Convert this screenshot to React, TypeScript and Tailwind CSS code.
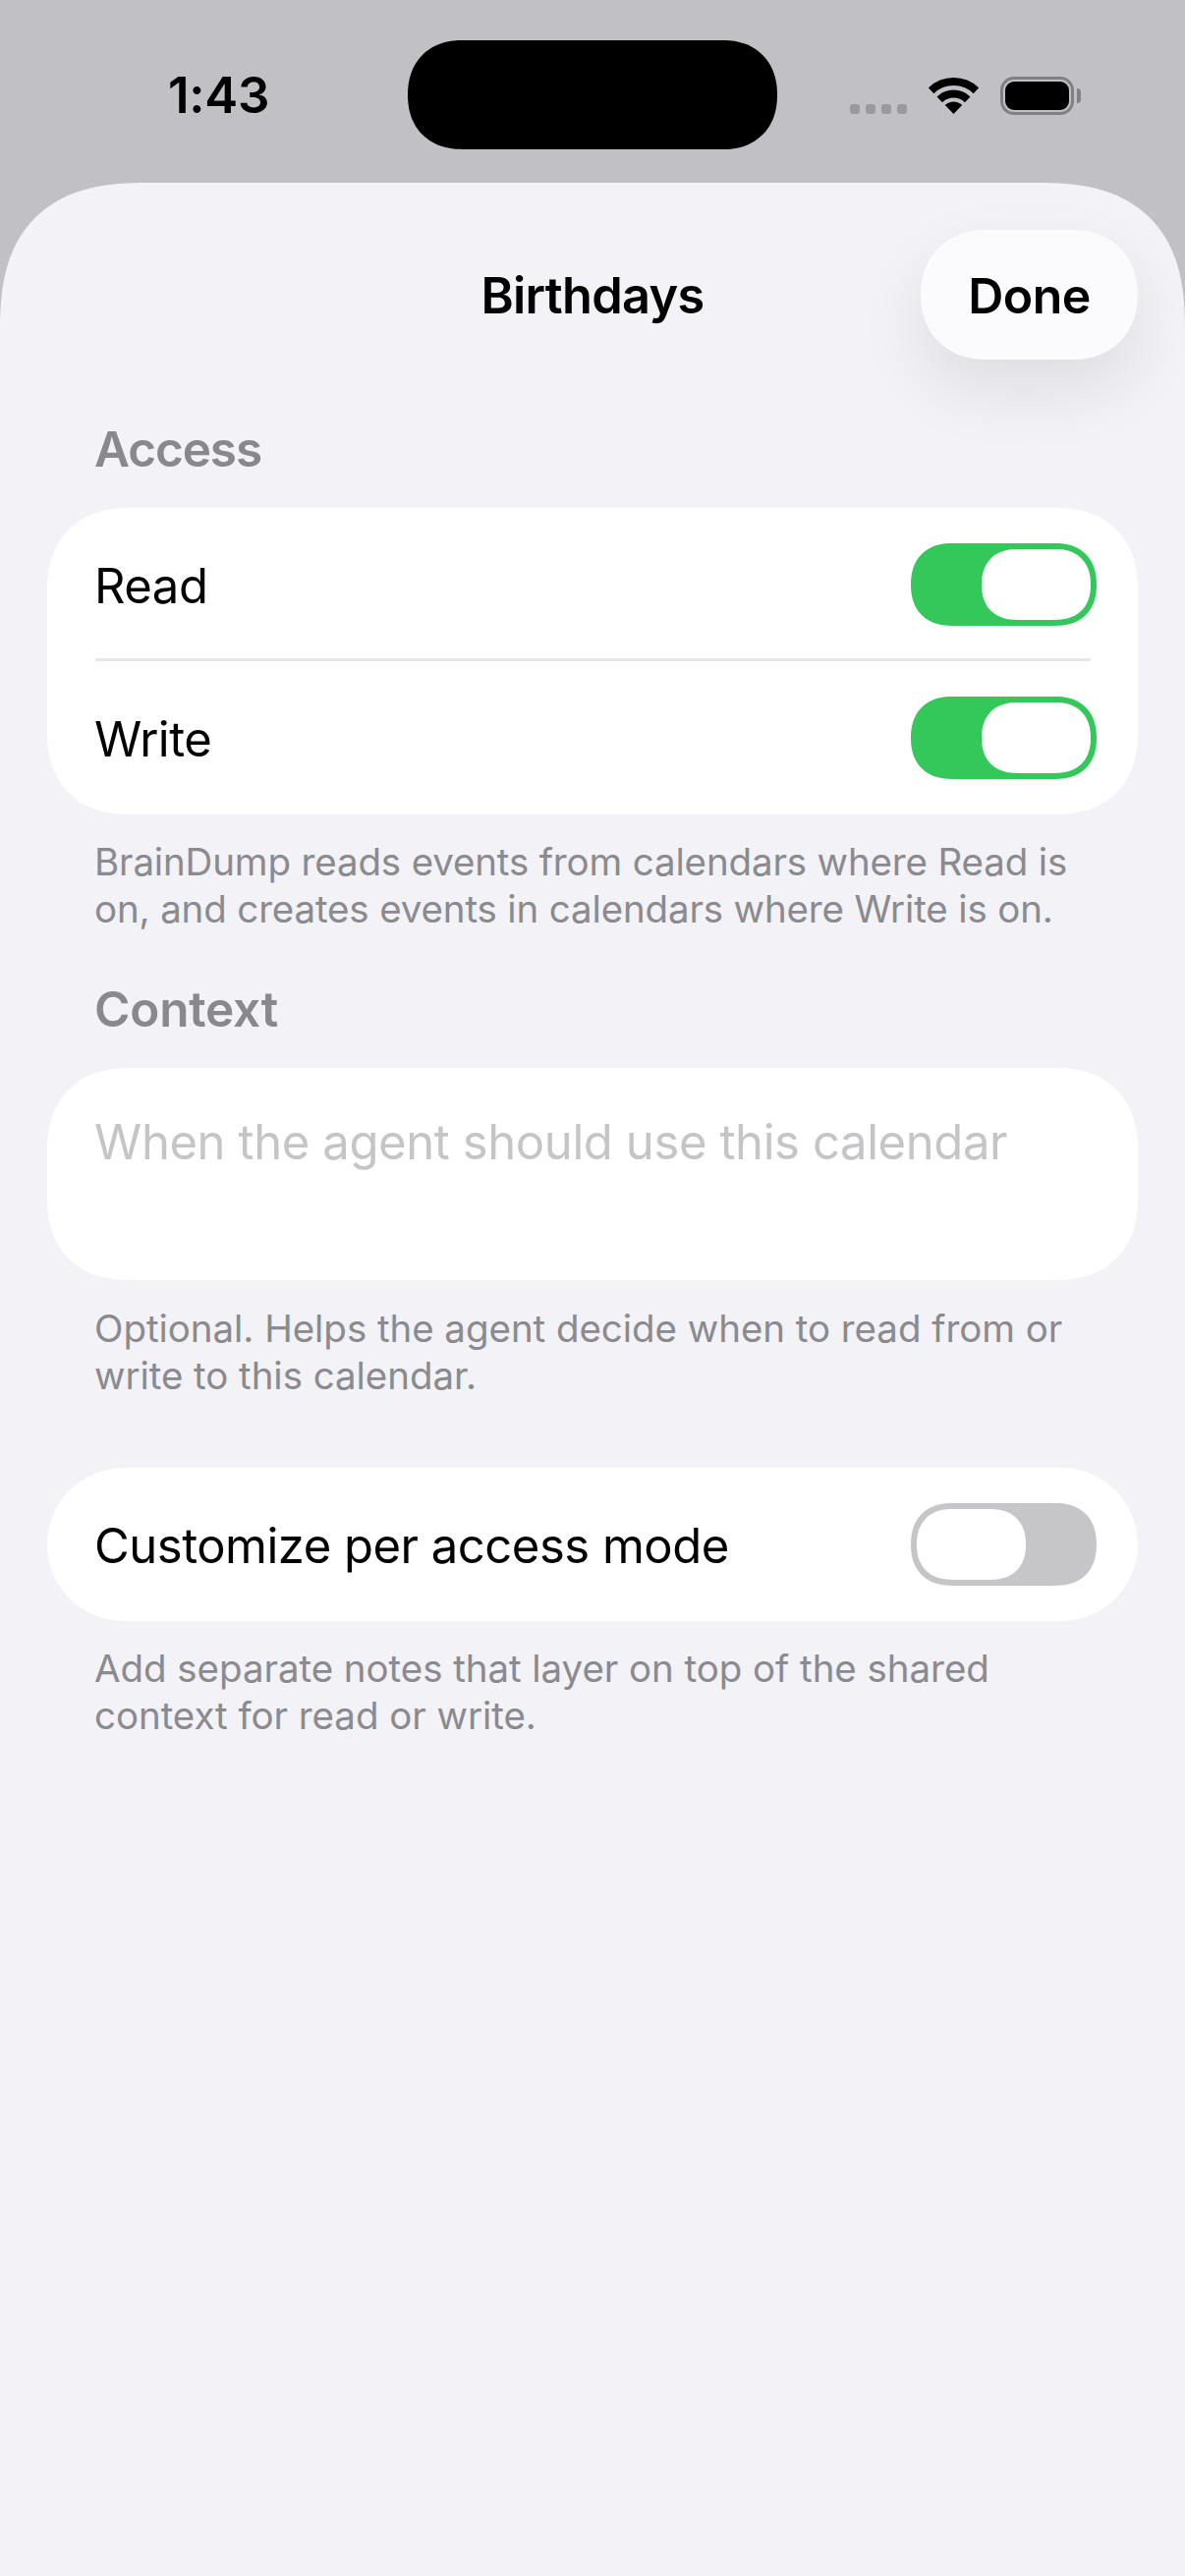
const font = { fontFamily: "Inter, 'Noto Sans', sans-serif" };

function Toggle({ on }: { on: boolean }) {
  return (
    <div
      className={`flex h-[84px] w-[189px] shrink-0 rounded-[42px] p-[6px] [corner-shape:superellipse(1.2)] ${
        on ? "justify-end bg-[#34c85a]" : "justify-start bg-[#c6c6c8]"
      }`}
    >
      <div className="h-[72px] w-[111px] rounded-[36px] bg-white [corner-shape:superellipse(1.2)]" />
    </div>
  );
}

function Row({ label, on }: { label: string; on: boolean }) {
  return (
    <div className="flex h-[156px] items-center justify-between pl-[48px] pr-[42px]">
      <span className="pt-[3px] text-[49px] leading-[60px] tracking-[-0.5px] text-black">{label}</span>
      <Toggle on={on} />
    </div>
  );
}

function Header({ children, className }: { children: string; className: string }) {
  return (
    <div className={`flex h-[60px] items-center pl-[96px] text-[49.5px] font-semibold text-[#88888d] ${className}`}>
      {children}
    </div>
  );
}

function Footer({ lines, className }: { lines: string[]; className: string }) {
  return (
    <div className={`pl-[96px] text-[38.5px] leading-[48px] text-[#8a8a8f] ${className}`}>
      {lines.map((l) => (
        <div key={l} className="whitespace-nowrap">{l}</div>
      ))}
    </div>
  );
}

export default function App() {
  return (
    <div className="flex h-[2622px] w-[1206px] flex-col overflow-hidden bg-[#c1c0c5]" style={font}>
      <div className="flex h-[186px] shrink-0 items-start">
        <div className="flex h-[117px] w-[415px] items-end pl-[171px] text-[51px] font-semibold leading-[40px] tracking-[-0.3px] text-black">
          1:43
        </div>
        <div className="mt-[41px] h-[111px] w-[376px] rounded-[55.5px] bg-black [corner-shape:superellipse(1.15)]" />
        <div className="ml-[74px] mt-[106px] flex gap-[6px]">
          {[0, 1, 2, 3].map((i) => (
            <div key={i} className="h-[10px] w-[10px] rounded-[3px] bg-[#9a9a9d]" />
          ))}
        </div>
        <svg className="ml-[22px] mt-[79px]" width="51" height="37" viewBox="0 0 51 37">
          <path d="M2.6 13.3A33 33 0 0 1 48.4 13.3" fill="none" stroke="#000" strokeWidth="8" />
          <path d="M11.3 22.3A20.5 20.5 0 0 1 39.7 22.3" fill="none" stroke="#000" strokeWidth="8" />
          <path d="M25.5 37L16.8 28A12.5 12.5 0 0 1 34.2 28Z" fill="#000" />
        </svg>
        <div className="ml-[22px] mt-[78px] flex items-center">
          <div className="h-[39px] w-[75px] rounded-[14px] border-[3px] border-[#808085] p-[2px]">
            <div className="h-full w-full rounded-[9px] bg-black" />
          </div>
          <div className="ml-[3px] h-[15px] w-[4px] rounded-r-[4px] bg-[#808085]" />
        </div>
      </div>

      <div className="flex-1 overflow-hidden rounded-t-[150px] bg-[#f2f2f7] [corner-shape:superellipse(1.35)]">
        <div className="mt-[48px] grid h-[132px] grid-cols-[1fr_auto_1fr] items-center px-[48px]">
          <div />
          <div className="pt-[2px] text-[50.5px] font-semibold tracking-[-0.7px] text-black">Birthdays</div>
          <div className="flex justify-end">
            <div className="flex h-[132px] w-[221px] items-center justify-center rounded-[66px] bg-[#fbfbfe] pt-[2px] text-[50px] font-semibold tracking-[-0.6px] text-black shadow-[0_30px_70px_rgba(0,0,0,0.09)] [corner-shape:superellipse(1.1)]">
              Done
            </div>
          </div>
        </div>

        <Header className="mt-[61px] tracking-[-1.1px]">Access</Header>
        <div className="mx-[48px] mt-[30px] rounded-[84px] bg-white [corner-shape:superellipse(1.2)]">
          <Row label="Read" on />
          <div className="-mt-[3px] ml-[49px] mr-[48px] h-[3px] bg-[#e6e6e8]" />
          <Row label="Write" on />
        </div>
        <Footer
          className="mt-[24px] tracking-[-0.15px]"
          lines={[
            "BrainDump reads events from calendars where Read is",
            "on, and creates events in calendars where Write is on.",
          ]}
        />

        <Header className="mt-[48px] tracking-[-0.2px]">Context</Header>
        <div className="mx-[48px] mt-[30px] h-[216px] rounded-[84px] bg-white pl-[48px] pt-[46px] [corner-shape:superellipse(1.2)]">
          <div className="text-[49px] leading-[60px] tracking-[-0.4px] text-[#c5c5c7]">When the agent should use this calendar</div>
        </div>
        <Footer
          className="mt-[25px] tracking-[-0.05px]"
          lines={["Optional. Helps the agent decide when to read from or", "write to this calendar."]}
        />

        <div className="mx-[48px] mt-[70px] rounded-[78px] bg-white">
          <Row label="Customize per access mode" on={false} />
        </div>
        <Footer
          className="mt-[24px] tracking-[-0.05px]"
          lines={["Add separate notes that layer on top of the shared", "context for read or write."]}
        />
      </div>
    </div>
  );
}
